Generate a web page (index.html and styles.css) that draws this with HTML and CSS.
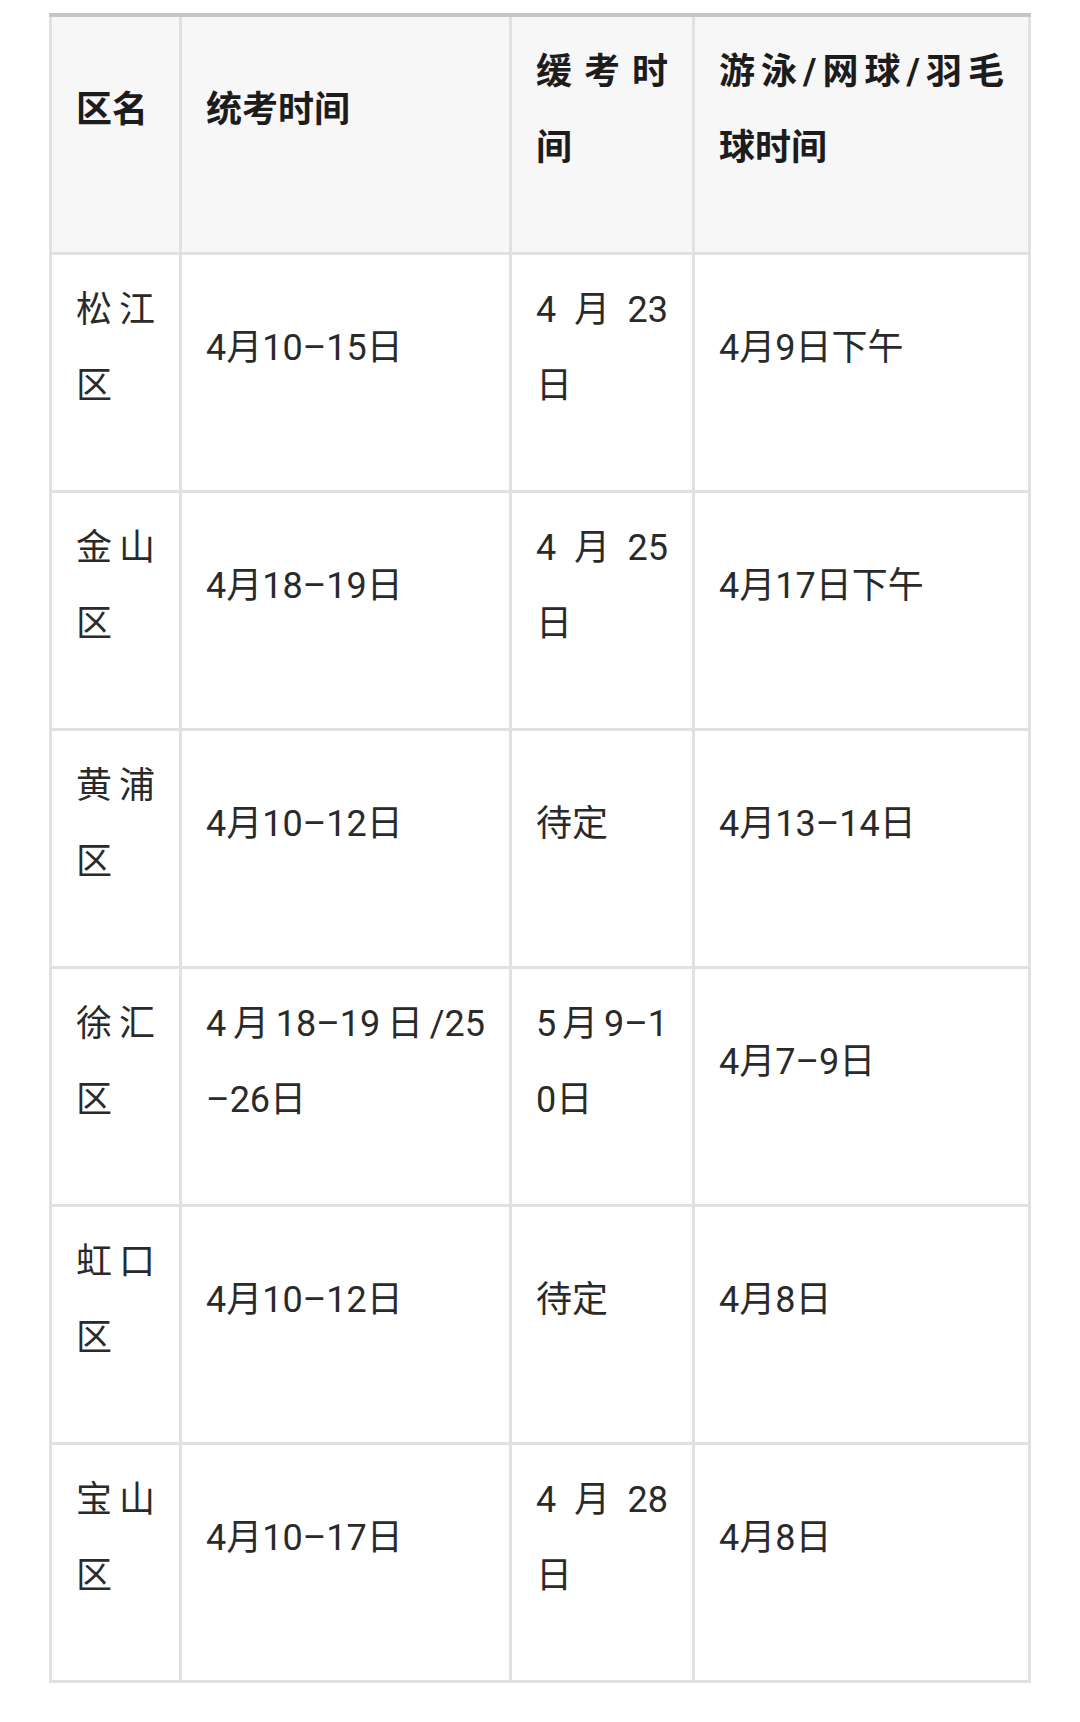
FILE: index.html
```html
<!DOCTYPE html>
<html lang="zh-CN">
<head>
<meta charset="utf-8">
<title>各区考试时间</title>
<link rel="stylesheet" href="styles.css">
</head>
<body>
<div class="page">
  <div class="grid">
    <div class="c h first"><span>区名</span></div>
    <div class="c h"><span>统考时间</span></div>
    <div class="c h"><span class="j">缓考时</span><span>间</span></div>
    <div class="c h"><span class="j">游泳/网球/羽毛</span><span>球时间</span></div>

    <div class="c first"><span class="j">松江</span><span>区</span></div>
    <div class="c"><span>4月10–15日</span></div>
    <div class="c"><span class="j">4月23</span><span>日</span></div>
    <div class="c"><span>4月9日下午</span></div>

    <div class="c first"><span class="j">金山</span><span>区</span></div>
    <div class="c"><span>4月18–19日</span></div>
    <div class="c"><span class="j">4月25</span><span>日</span></div>
    <div class="c"><span>4月17日下午</span></div>

    <div class="c first"><span class="j">黄浦</span><span>区</span></div>
    <div class="c"><span>4月10–12日</span></div>
    <div class="c"><span>待定</span></div>
    <div class="c"><span>4月13–14日</span></div>

    <div class="c first"><span class="j">徐汇</span><span>区</span></div>
    <div class="c"><span class="j">4月18–19日/25</span><span>–26日</span></div>
    <div class="c"><span class="j">5月9–1</span><span>0日</span></div>
    <div class="c"><span>4月7–9日</span></div>

    <div class="c first"><span class="j">虹口</span><span>区</span></div>
    <div class="c"><span>4月10–12日</span></div>
    <div class="c"><span>待定</span></div>
    <div class="c"><span>4月8日</span></div>

    <div class="c first"><span class="j">宝山</span><span>区</span></div>
    <div class="c"><span>4月10–17日</span></div>
    <div class="c"><span class="j">4月28</span><span>日</span></div>
    <div class="c"><span>4月8日</span></div>
  </div>
</div>
</body>
</html>
```

FILE: styles.css
```css
* {
  box-sizing: border-box;
}

html, body {
  margin: 0;
  padding: 0;
  background: #ffffff;
}

body {
  font-family: Roboto, "Noto Sans CJK SC", sans-serif;
  color: #2a2a2a;
}

.page {
  padding: 13px 0 40px 49px;
}

.grid {
  display: grid;
  grid-template-columns: 133px 330px 183px 336px;
  width: 982px;
  border-top: 4px solid #c6c6c6;
}

.c {
  display: flex;
  flex-direction: column;
  justify-content: center;
  padding: 17px 24px 66px 24px;
  border-right: 3px solid #e1e1e1;
  border-bottom: 3px solid #e1e1e1;
  font-size: 36px;
  line-height: 76px;
  white-space: nowrap;
}

.first {
  border-left: 3px solid #e1e1e1;
}

.h {
  background: #f7f7f7;
  font-weight: 700;
  color: #1c1c1c;
}

.c span {
  display: block;
}

.c .j {
  text-align: justify;
  text-align-last: justify;
}
```
